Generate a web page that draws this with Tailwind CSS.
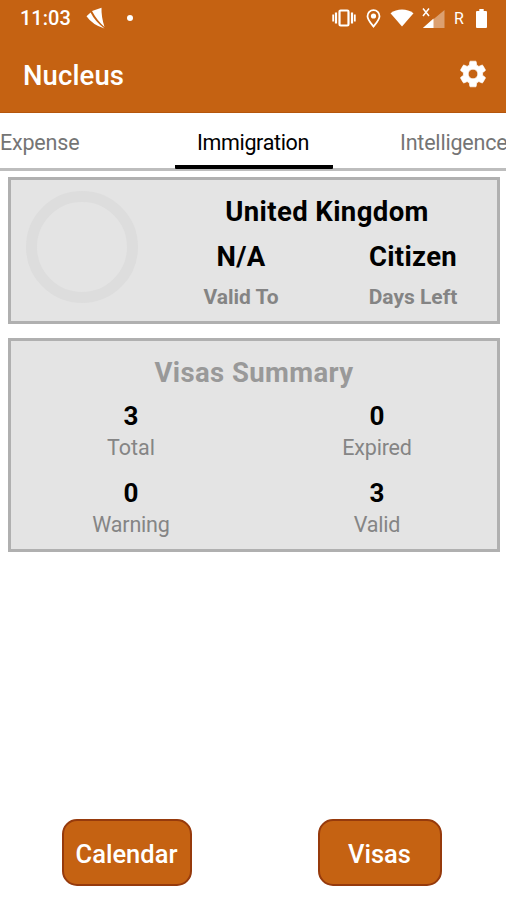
<!DOCTYPE html>
<html lang="en">
<head>
<meta charset="utf-8">
<title>Nucleus</title>
<script src="https://cdn.jsdelivr.net/npm/@tailwindcss/browser@4"></script>
</head>
<body class="bg-white">
<div class="w-[506px] h-[900px] overflow-hidden bg-white font-[Roboto,sans-serif] flex flex-col">
  <header class="h-[113px] shrink-0 bg-[#c56212] border-b border-[#b5560c] text-white">
    <div class="h-9 flex items-center pl-5 pr-[19px]">
      <span class="text-[20px] leading-9 font-medium w-[51px] whitespace-nowrap">11:03</span>
      <svg class="ml-[15px]" width="20" height="22" viewBox="0 0 20 22" fill="#fff"><path d="M6 4 15.500 .8Q15.200 10 18.500 20 11 13.500 6 4Z"/><path d="M.5 9.300 4.600 5.500Q9 14.500 18.500 21.500 6.500 18 .5 9.300Z"/></svg>
      <span class="ml-[21px] size-[6px] rounded-full bg-white"></span>
      <div class="ml-auto flex items-center">
        <svg width="24" height="18" viewBox="0 0 24 18" fill="none" stroke="#fff"><rect x="7.500" y="1.500" width="9" height="15" rx="1.200" stroke-width="2.200"/><path d="M4 3.500v11M20 3.500v11" stroke-width="2.200"/><path d="M1.200 5.500v7M22.800 5.500v7" stroke-width="1.800"/></svg>
        <svg class="ml-[10px]" width="15" height="19" viewBox="0 0 15 19" fill="none" stroke="#fff"><path d="M7.500 17.500C4.500 13.800 1.500 10.500 1.500 7.200A6 6 0 0 1 13.500 7.200C13.500 10.500 10.500 13.800 7.500 17.500Z" stroke-width="1.800"/><circle cx="7.500" cy="7" r="2.600" fill="#fff" stroke="none"/></svg>
        <svg class="ml-[9px]" width="24" height="18" viewBox="0 0 24 18" fill="#fff"><path d="M12 17.500.5 4.200Q5.500.5 12 .5T23.500 4.200Z"/></svg>
        <svg class="ml-[8px]" width="23" height="22" viewBox="0 0 23 22"><path d="M22.500 3v18h-12V13Z" fill="#fff" fill-opacity=".4"/><path d="M11.500 11.500V21H.8Z" fill="#fff"/><path d="M1 1.500l6 7.500M7 1.500 1 9" stroke="#fff" stroke-width="1.500"/></svg>
        <span class="ml-[9px] w-[10px] text-[16px] leading-[18px] pt-[2px]">R</span>
        <svg class="ml-[12px]" width="11" height="19" viewBox="0 0 11 19" fill="#fff"><path d="M3.300 0h4.400v2H10a1 1 0 0 1 1 1v15a1 1 0 0 1-1 1H1a1 1 0 0 1-1-1V3a1 1 0 0 1 1-1h2.300Z"/></svg>
      </div>
    </div>
    <div class="h-[76px] flex items-center justify-between pl-[23px] pr-[17px]">
      <h1 class="text-[27.500px] leading-8 font-medium pt-[3px] tracking-[0.1px]">Nucleus</h1>
      <svg width="32" height="32" viewBox="0 0 24 24" fill="#fff"><path stroke="#fff" stroke-width=".5" d="M19.140 12.940c.04-.3.060-.61.060-.94 0-.32-.02-.64-.07-.94l2.030-1.580a.49.49 0 0 0 .12-.61l-1.920-3.320a.488.488 0 0 0-.59-.22l-2.390.96c-.5-.38-1.030-.7-1.620-.94l-.36-2.540a.484.484 0 0 0-.48-.41h-3.840c-.24 0-.43.170-.47.410l-.36 2.540c-.59.240-1.130.570-1.620.940l-2.390-.96c-.22-.08-.47 0-.59.220L2.740 8.870c-.12.210-.08.470.12.610l2.030 1.580c-.05.3-.09.630-.09.940s.02.640.070.940l-2.030 1.580a.49.49 0 0 0-.12.610l1.920 3.320c.12.220.370.290.590.220l2.390-.96c.5.380 1.030.7 1.620.940l.36 2.540c.05.240.240.410.480.410h3.840c.24 0 .440-.17.470-.41l.36-2.540c.59-.24 1.130-.56 1.620-.94l2.390.96c.22.080.470 0 .59-.22l1.920-3.320c.12-.22.070-.47-.12-.61l-2.010-1.580ZM12 15.600A3.600 3.600 0 1 1 12 8.400a3.600 3.600 0 0 1 0 7.200Z"/></svg>
    </div>
  </header>

  <nav class="h-[58px] shrink-0 flex justify-between text-[21.500px] leading-[60px] text-[#757575] border-b-[3px] border-[#bdbdbd]">
    <span class="w-[175px] tracking-[-0.2px]">Expense</span>
    <span class="w-[158px] h-[56px] text-center tracking-[-0.350px] text-black border-b-[4px] border-black rounded-b-[1px] pr-[2px]">Immigration</span>
    <span class="w-[173px] pl-[67px] whitespace-nowrap tracking-[-0.2px]">Intelligence</span>
  </nav>

  <main class="flex-1 flex flex-col pl-2 pr-[6px] pt-[6px]">
    <section class="h-[147px] shrink-0 bg-[#e4e4e4] border-[3px] border-[#b0b0b0] flex">
      <div class="ml-[15px] mt-[11px] size-[112px] shrink-0 rounded-full border-[11px] border-[#dddddd]"></div>
      <div class="ml-[17px] w-[344px] shrink-0 grid grid-cols-2 content-start text-center pt-[9px] font-bold">
        <h2 class="col-span-2 text-[27.500px] leading-[46px] tracking-[0.4px]">United Kingdom</h2>
        <div>
          <p class="text-[27.500px] leading-[44px] tracking-[0.3px]">N/A</p>
          <p class="text-[21px] leading-[36px] text-[#848484]">Valid To</p>
        </div>
        <div>
          <p class="text-[27.500px] leading-[44px] tracking-[0.3px]">Citizen</p>
          <p class="text-[21px] leading-[36px] text-[#848484]">Days Left</p>
        </div>
      </div>
    </section>

    <section class="mt-[14px] h-[214px] shrink-0 bg-[#e4e4e4] border-[3px] border-[#b0b0b0] text-center pt-[9px]">
      <h2 class="text-[27.500px] leading-[46px] tracking-[0.4px] font-bold text-[#999999]">Visas Summary</h2>
      <div class="-mx-[3px] grid grid-cols-2 text-[21.500px] text-[#858585]">
        <div class="h-[77px]"><p class="text-[26px] leading-[40px] font-bold text-black">3</p><p class="leading-[23px]">Total</p></div>
        <div class="h-[77px]"><p class="text-[26px] leading-[40px] font-bold text-black">0</p><p class="leading-[23px] tracking-[-0.2px]">Expired</p></div>
        <div class="h-[77px]"><p class="text-[26px] leading-[40px] font-bold text-black">0</p><p class="leading-[23px] tracking-[-0.2px]">Warning</p></div>
        <div class="h-[77px]"><p class="text-[26px] leading-[40px] font-bold text-black">3</p><p class="leading-[23px] tracking-[-0.2px]">Valid</p></div>
      </div>
    </section>
  </main>

  <footer class="h-[81px] shrink-0 grid grid-cols-2 justify-items-center items-start text-white text-[25.500px] font-medium">
    <button class="w-[130px] h-[67px] rounded-[15px] bg-[#c56212] border-2 border-[#963a0c] pt-[3px]">Calendar</button>
    <button class="w-[124px] h-[67px] rounded-[15px] bg-[#c56212] border-2 border-[#963a0c] pt-[3px]">Visas</button>
  </footer>
</div>
</body>
</html>
